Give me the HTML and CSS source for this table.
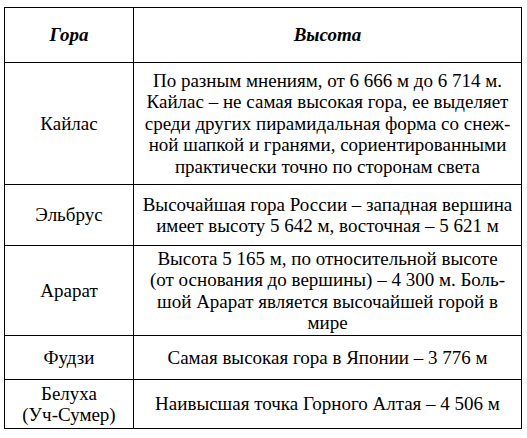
FILE: index.html
```html
<!DOCTYPE html>
<html lang="ru">
<head>
<meta charset="utf-8">
<link rel="stylesheet" href="styles.css">
</head>
<body>
<table class="mt">
  <colgroup><col class="c1"><col class="c2"></colgroup>
  <thead>
    <tr class="h-head"><th>Гора</th><th>Высота</th></tr>
  </thead>
  <tbody>
    <tr class="h-kailas"><td>Кайлас</td><td>По разным мнениям, от 6 666 м до 6 714 м.<br>Кайлас – не самая высокая гора, ее выделяет<br>среди других пирамидальная форма со снеж-<br>ной шапкой и гранями, сориентированными<br>практически точно по сторонам света</td></tr>
    <tr class="h-elbrus"><td>Эльбрус</td><td>Высочайшая гора России – западная вершина<br>имеет высоту 5 642 м, восточная – 5 621 м</td></tr>
    <tr class="h-ararat"><td>Арарат</td><td>Высота 5 165 м, по относительной высоте<br>(от основания до вершины) – 4 300 м. Боль-<br>шой Арарат является высочайшей горой в<br>мире</td></tr>
    <tr class="h-fuji"><td>Фудзи</td><td>Самая высокая гора в Японии – 3 776 м</td></tr>
    <tr class="h-bel"><td>Белуха<br>(Уч-Сумер)</td><td>Наивысшая точка Горного Алтая – 4 506 м</td></tr>
  </tbody>
</table>
</body>
</html>
```
FILE: styles.css
```css
html, body { margin: 0; padding: 0; background: #fff; }
body { padding: 7px 0 0 4px; color: #000; font-family: "Liberation Serif", "Times New Roman", serif; }
.mt { font-family: "Liberation Serif", "Times New Roman", serif; border-collapse: collapse; width: 518px; table-layout: fixed; font-size: 19px; line-height: 21.5px; }
.c1 { width: 129px; }
.mt th, .mt td { border: 1px solid #000; padding: 0 1px; text-align: center; vertical-align: middle; }
.mt th { font-weight: bold; font-style: italic; }
.h-head { height: 55px; }
.h-kailas { height: 122px; }
.h-elbrus { height: 61px; }
.h-ararat { height: 90px; }
.h-fuji { height: 44px; }
.h-bel { height: 49px; }
```
